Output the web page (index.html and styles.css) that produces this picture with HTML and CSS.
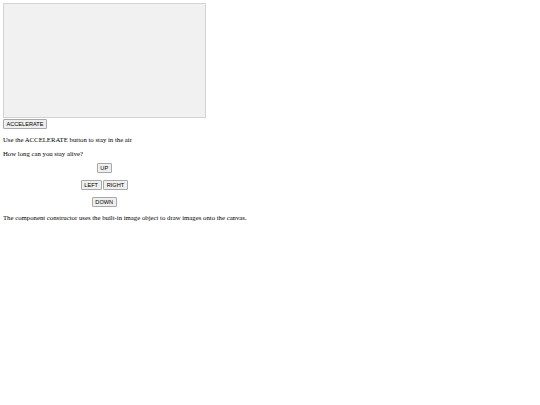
FILE: index.html
```html
<!DOCTYPE html>
<html>
<head>
<meta charset="utf-8">
<link rel="stylesheet" href="styles.css">
</head>
<body class="page">
<canvas class="game-area" width="480" height="270"></canvas><br>
<button class="btn">ACCELERATE</button>
<p class="text">Use the ACCELERATE button to stay in the air</p>
<p class="text">How long can you stay alive?</p>
<div class="controls">
  <button class="btn">UP</button><br><br>
  <button class="btn">LEFT</button>
  <button class="btn">RIGHT</button><br><br>
  <button class="btn">DOWN</button>
</div>
<p class="text">The component constructor uses the built-in image object to draw images onto the canvas.</p>
</body>
</html>
```
FILE: styles.css
```css
.page {
  margin: 3px;
  font-family: "Liberation Serif", "Times New Roman", serif;
  font-size: 6.75px;
  color: #000;
  background: #fff;
}
.game-area {
  width: 201px;
  height: 113px;
  border: 1px solid #d3d3d3;
  background-color: #f1f1f1;
  vertical-align: baseline;
}
.btn {
  font-family: "Liberation Sans", Arial, sans-serif;
  font-size: 5.625px;
  line-height: normal;
  color: #000;
  padding: 1px 2.5px;
  margin: 0;
  border: 1px solid #a8a8a8;
  border-radius: 1px;
  background: #efefef;
}
.text {
  margin: 6.75px 0;
}
.controls {
  text-align: center;
  width: 202.5px;
}
```
